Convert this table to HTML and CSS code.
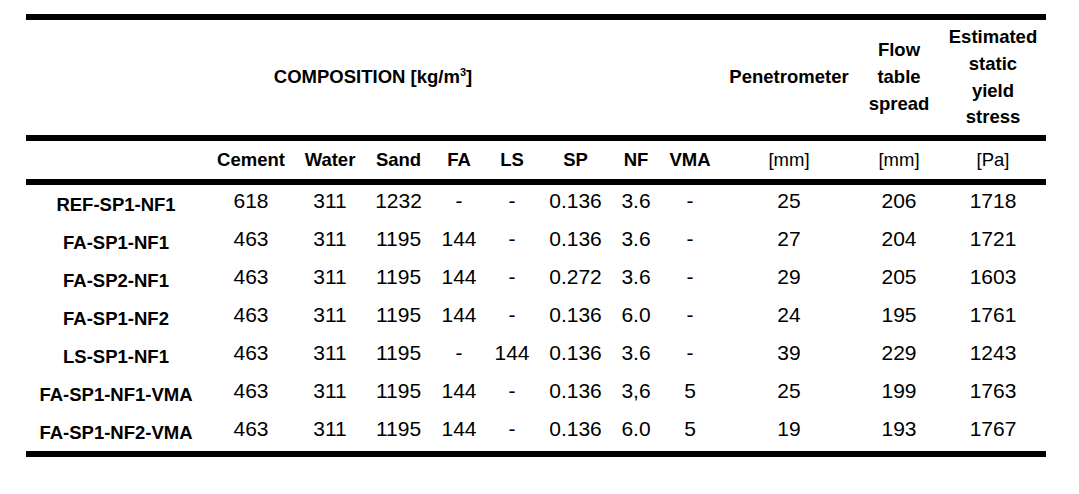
FILE: index.html
```html
<!DOCTYPE html>
<html>
<head>
<meta charset="utf-8">
<link rel="stylesheet" href="styles.css">
</head>
<body>
<div class="page">
  <div class="tbl">
    <div class="rule"></div>
    <div class="h1 comp"><span>COMPOSITION [kg/m<sup>3</sup>]</span></div>
    <div class="h1">Penetrometer</div>
    <div class="h1"><span>Flow<br>table<br>spread</span></div>
    <div class="h1"><span>Estimated<br>static<br>yield<br>stress</span></div>
    <div class="rule"></div>
    <div class="h2"></div>
    <div class="h2 b">Cement</div>
    <div class="h2 b">Water</div>
    <div class="h2 b">Sand</div>
    <div class="h2 b">FA</div>
    <div class="h2 b">LS</div>
    <div class="h2 b">SP</div>
    <div class="h2 b">NF</div>
    <div class="h2 b">VMA</div>
    <div class="h2">[mm]</div>
    <div class="h2">[mm]</div>
    <div class="h2">[Pa]</div>
    <div class="rule"></div>

    <div class="lab">REF-SP1-NF1</div><div class="n">618</div><div class="n">311</div><div class="n">1232</div><div class="n">-</div><div class="n">-</div><div class="n">0.136</div><div class="n">3.6</div><div class="n">-</div><div class="n">25</div><div class="n">206</div><div class="n">1718</div>
    <div class="lab">FA-SP1-NF1</div><div class="n">463</div><div class="n">311</div><div class="n">1195</div><div class="n">144</div><div class="n">-</div><div class="n">0.136</div><div class="n">3.6</div><div class="n">-</div><div class="n">27</div><div class="n">204</div><div class="n">1721</div>
    <div class="lab">FA-SP2-NF1</div><div class="n">463</div><div class="n">311</div><div class="n">1195</div><div class="n">144</div><div class="n">-</div><div class="n">0.272</div><div class="n">3.6</div><div class="n">-</div><div class="n">29</div><div class="n">205</div><div class="n">1603</div>
    <div class="lab">FA-SP1-NF2</div><div class="n">463</div><div class="n">311</div><div class="n">1195</div><div class="n">144</div><div class="n">-</div><div class="n">0.136</div><div class="n">6.0</div><div class="n">-</div><div class="n">24</div><div class="n">195</div><div class="n">1761</div>
    <div class="lab">LS-SP1-NF1</div><div class="n">463</div><div class="n">311</div><div class="n">1195</div><div class="n">-</div><div class="n">144</div><div class="n">0.136</div><div class="n">3.6</div><div class="n">-</div><div class="n">39</div><div class="n">229</div><div class="n">1243</div>
    <div class="lab">FA-SP1-NF1-VMA</div><div class="n">463</div><div class="n">311</div><div class="n">1195</div><div class="n">144</div><div class="n">-</div><div class="n">0.136</div><div class="n">3,6</div><div class="n">5</div><div class="n">25</div><div class="n">199</div><div class="n">1763</div>
    <div class="lab">FA-SP1-NF2-VMA</div><div class="n">463</div><div class="n">311</div><div class="n">1195</div><div class="n">144</div><div class="n">-</div><div class="n">0.136</div><div class="n">6.0</div><div class="n">5</div><div class="n">19</div><div class="n">193</div><div class="n">1767</div>
    <div class="rule"></div>
  </div>
</div>
</body>
</html>
```

FILE: styles.css
```css
html, body {
  margin: 0;
  padding: 0;
  background: #ffffff;
}
.page {
  padding: 14px 0 0 26px;
  font-family: "Liberation Sans", Arial, sans-serif;
  color: #000;
}
.tbl {
  display: grid;
  width: 1020px;
  grid-template-columns: 180px 90px 68px 69px 52px 54px 73px 48px 60px 138px 82px 106px;
  grid-template-rows: 6px 115px 6px 38px 6px repeat(7, 38px) 6px;
}
.rule {
  grid-column: 1 / -1;
  background: #000;
  height: 6px;
}
.h1, .h2, .lab, .n {
  display: flex;
  align-items: center;
  justify-content: center;
  text-align: center;
  white-space: nowrap;
}
.h1 {
  font-weight: bold;
  font-size: 18.5px;
  line-height: 26.7px;
}
.comp {
  grid-column: 1 / 10;
}
.comp sup {
  font-size: 11px;
  line-height: 0;
  vertical-align: 0;
  position: relative;
  top: -7px;
}
.h2 {
  font-size: 18.5px;
}
.h2.b {
  font-weight: bold;
}
.lab {
  font-weight: bold;
  font-size: 18.5px;
  padding-top: 1px;
}
.n {
  font-size: 21px;
  padding-bottom: 6px;
}
```
